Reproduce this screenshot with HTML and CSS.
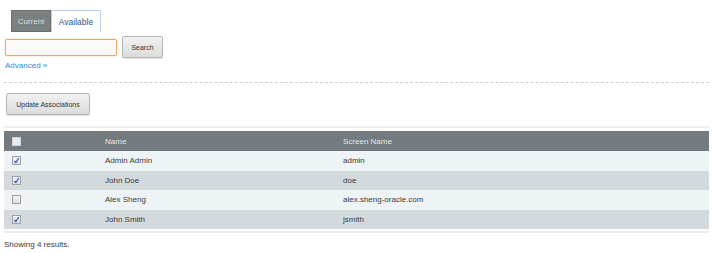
FILE: index.html
```html
<!DOCTYPE html>
<html lang="en">
<head>
  <meta charset="UTF-8">
  <title>Site Memberships</title>
  <link rel="stylesheet" href="styles.css">
</head>
<body>

<div class="tabs">
  <span class="tab">Current</span>
  <span class="tab active">Available</span>
</div>

<form class="search-row">
  <input type="text" class="search-input">
  <button type="button" class="btn search-btn">Search</button>
</form>
<a class="advanced" href="#">Advanced &raquo;</a>

<div class="separator"></div>

<button type="button" class="btn update-btn">Update Associations</button>

<div class="results">
  <table class="grid">
    <thead>
      <tr>
        <th class="col-check"><span class="check"></span></th>
        <th class="col-name">Name</th>
        <th>Screen Name</th>
      </tr>
    </thead>
    <tbody>
      <tr>
        <td class="col-check"><span class="check on"><svg viewBox="0 0 8 8"><path d="M1.5 4.5 L3.3 6.3 L6.6 1.2" /></svg></span></td>
        <td class="col-name">Admin Admin</td>
        <td>admin</td>
      </tr>
      <tr>
        <td class="col-check"><span class="check on"><svg viewBox="0 0 8 8"><path d="M1.5 4.5 L3.3 6.3 L6.6 1.2" /></svg></span></td>
        <td class="col-name">John Doe</td>
        <td>doe</td>
      </tr>
      <tr>
        <td class="col-check"><span class="check"></span></td>
        <td class="col-name">Alex Sheng</td>
        <td>alex.sheng-oracle.com</td>
      </tr>
      <tr>
        <td class="col-check"><span class="check on"><svg viewBox="0 0 8 8"><path d="M1.5 4.5 L3.3 6.3 L6.6 1.2" /></svg></span></td>
        <td class="col-name">John Smith</td>
        <td>jsmith</td>
      </tr>
    </tbody>
  </table>
</div>

<p class="summary">Showing 4 results.</p>

</body>
</html>
```

FILE: styles.css
```css
* {
  box-sizing: border-box;
  margin: 0;
  padding: 0;
}

body {
  width: 714px;
  height: 253px;
  overflow: hidden;
  background: #fff;
  font-family: "Liberation Sans", Arial, sans-serif;
  font-size: 8px;
  color: #3a3a3a;
  padding: 10px 5px 0 4px;
}

.tabs {
  display: flex;
  padding-left: 7px;
  height: 22px;
}

.tab {
  display: flex;
  align-items: center;
  justify-content: center;
  height: 22px;
  width: 40px;
  background: #7b8081;
  border: 1px solid #6a6f70;
  color: #d8dcdd;
  font-size: 8px;
}

.tab.active {
  width: 50px;
  background: #fff;
  border: 1px solid #b9d2ea;
  border-bottom: none;
  color: #2a5c8c;
  font-size: 8.5px;
}

.search-row {
  display: flex;
  align-items: center;
  gap: 5px;
  margin-top: 4px;
  padding-left: 1px;
}

.search-input {
  width: 112px;
  height: 17px;
  border: 1px solid #f0a865;
  border-radius: 2px;
  box-shadow: 0 0 2px #f7c79a;
  background: #fafafa;
  outline: none;
}

.btn {
  font-family: "Liberation Sans", Arial, sans-serif;
  font-size: 7px;
  color: #333;
  background: linear-gradient(#f1f1f1, #dcdcdc);
  border: 1px solid #b5b5b5;
  border-radius: 2px;
  box-shadow: 0 1px 1px rgba(0,0,0,0.12);
  cursor: pointer;
}

.search-btn {
  width: 41px;
  height: 22px;
}

.advanced {
  display: block;
  margin-top: 3px;
  padding-left: 1px;
  color: #2d8bd3;
  text-decoration: none;
  font-size: 8px;
}

.separator {
  margin-top: 12px;
  border-top: 1px dashed #cfcfcf;
}

.update-btn {
  margin: 10px 0 0 2px;
  width: 84px;
  height: 22px;
}

.results {
  margin-top: 11px;
  border-top: 2px solid #eeeeee;
  border-bottom: 2px solid #eeeeee;
  padding: 3px 0 2px;
}

.grid {
  width: 100%;
  border-collapse: collapse;
}

.grid th,
.grid td {
  height: 19.5px;
  text-align: left;
  font-weight: normal;
  padding: 0;
}

.grid th {
  background: #737b80;
  color: #e4e7e8;
  height: 20px;
}

.grid tbody tr:nth-child(odd) td {
  background: #eef3f5;
}

.grid tbody tr:nth-child(even) td {
  background: #d3d9dc;
}

.col-check {
  width: 101px;
  padding-left: 8px !important;
}

.col-name {
  width: 238px;
}

.check {
  display: inline-block;
  width: 9px;
  height: 9px;
  border: 1px solid #9da3a6;
  background: linear-gradient(#f4f4f4, #dedede);
  vertical-align: middle;
}

th .check {
  background: #e9ebec;
  border-color: #cfd3d5;
}

.check svg {
  display: block;
  width: 7px;
  height: 7px;
}

.check svg path {
  fill: none;
  stroke: #2b4fb0;
  stroke-width: 1.3;
}

.summary {
  margin-top: 7px;
  font-size: 8px;
  color: #3a3a3a;
}
```
